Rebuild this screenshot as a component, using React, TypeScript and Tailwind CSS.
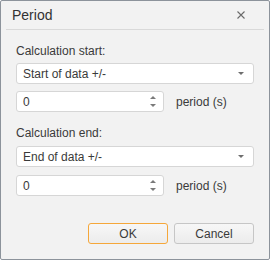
import React from "react";

function Caret() {
  return (
    <svg width="6" height="3" viewBox="0 0 6 3" className="block">
      <path d="M0 0 H6 L3 3 Z" fill="#6e6e6e" />
    </svg>
  );
}

function Spinner() {
  return (
    <div className="flex flex-col items-center gap-[5px]">
      <svg width="6" height="3" viewBox="0 0 6 3" className="block">
        <path d="M0 3 H6 L3 0 Z" fill="#7a7a7a" />
      </svg>
      <svg width="6" height="3" viewBox="0 0 6 3" className="block">
        <path d="M0 0 H6 L3 3 Z" fill="#7a7a7a" />
      </svg>
    </div>
  );
}

function Select({ text, className }: { text: string; className?: string }) {
  return (
    <div
      className={
        "h-[21px] w-full bg-white border border-[#d6d6d6] rounded-[3px] flex items-center justify-between pl-[6px] pr-[9px] " +
        (className ?? "")
      }
    >
      <span className="text-[12px] text-[#3a3a3a]">{text}</span>
      <Caret />
    </div>
  );
}

function NumberRow({ className }: { className?: string }) {
  return (
    <div className={"flex items-center " + (className ?? "")}>
      <div className="h-[21px] w-[148px] bg-white border border-[#d6d6d6] rounded-[3px] flex items-center justify-between pl-[6px] pr-[7px]">
        <span className="text-[12px] text-[#3a3a3a]">0</span>
        <Spinner />
      </div>
      <span className="ml-[12px] text-[12px] text-[#3a3a3a]">period (s)</span>
    </div>
  );
}

export default function App() {
  return (
    <div
      className="w-[270px] h-[260px] bg-white"
      style={{ fontFamily: '"Liberation Sans", Arial, sans-serif' }}
    >
      <div className="w-[270px] h-[260px] border border-[#8c939b] rounded-[2px] bg-[#f2f2f2] flex flex-col">
        <div className="h-[28px] flex items-center justify-between pl-[11px] pr-[24px]">
          <span className="text-[14px] text-[#333] leading-none">Period</span>
          <svg width="8" height="8" viewBox="0 0 8 8" className="block">
            <path d="M0.5 0.5 L7.5 7.5 M7.5 0.5 L0.5 7.5" stroke="#6a6a6a" strokeWidth="1.1" />
          </svg>
        </div>
        <div className="mx-[5px] h-px bg-[#d9d9d9]" />
        <div className="px-[15px] flex flex-col">
          <div className="mt-[14px] text-[12px] leading-[14px] text-[#3a3a3a]">Calculation start:</div>
          <Select text="Start of data +/-" className="mt-[5px]" />
          <NumberRow className="mt-[7px]" />
          <div className="mt-[14px] text-[12px] leading-[14px] text-[#3a3a3a]">Calculation end:</div>
          <Select text="End of data +/-" className="mt-[6px]" />
          <NumberRow className="mt-[8px]" />
          <div className="mt-[27px] flex justify-end gap-[6px]">
            <button className="w-[80px] h-[21px] rounded-[3px] border border-[#f5a73a] bg-gradient-to-b from-[#f7f7f7] to-[#ececec] text-[12px] text-[#3a3a3a]">
              OK
            </button>
            <button className="w-[80px] h-[21px] rounded-[3px] border border-[#c6c6c6] bg-gradient-to-b from-[#f7f7f7] to-[#ececec] text-[12px] text-[#3a3a3a]">
              Cancel
            </button>
          </div>
        </div>
      </div>
    </div>
  );
}
